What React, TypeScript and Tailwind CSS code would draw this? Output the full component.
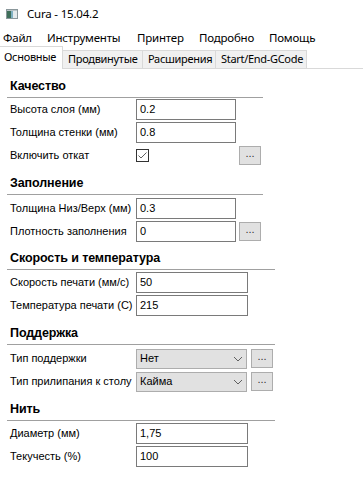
import type { ReactNode } from "react";

const ui = { fontFamily: '"Noto Sans", "Open Sans", sans-serif' };
const dlg = { fontFamily: '"Liberation Sans", Arial, sans-serif' };

function AppIcon() {
  return (
    <svg width="12" height="10" viewBox="0 0 12 10" aria-hidden="true">
      <rect x="0.5" y="0.5" width="11" height="9" fill="#e4eaec" stroke="#8a979b" />
      <rect x="1" y="2" width="4" height="7" fill="#3f6f5a" />
      <rect x="5" y="2" width="2" height="7" fill="#7fb0c2" />
      <rect x="1" y="1" width="10" height="1" fill="#b9c4c7" />
    </svg>
  );
}

function Section({
  title,
  width,
  h,
  pt,
  children,
}: {
  title: string;
  width: number;
  h: number;
  pt: number;
  children: ReactNode;
}) {
  return (
    <div>
      <div
        className="flex items-end border-b border-[#a0a0a0] pb-[1px] pl-[3px] text-[12.5px] font-bold tracking-[-0.1px] text-black"
        style={{ width, height: h }}
      >
        {title}
      </div>
      <div className="flex flex-col gap-[2px] pl-[3px]" style={{ paddingTop: pt }}>
        {children}
      </div>
    </div>
  );
}

function Row({ label, children }: { label: string; children: ReactNode }) {
  return (
    <div className="flex h-[21px] items-center">
      <span className="w-[126px] shrink-0 text-[11px] text-black">{label}</span>
      {children}
    </div>
  );
}

function Field({ value, w }: { value: string; w: number }) {
  return (
    <div
      className="flex h-[21px] items-center border border-[#7a7a7a] bg-white pl-[3px] text-[11px] text-black"
      style={{ width: w }}
    >
      {value}
    </div>
  );
}

function Dots({ ml }: { ml: number }) {
  return (
    <button
      type="button"
      className="flex h-[19px] w-[22px] items-center justify-center border border-[#adadad] bg-[#e1e1e1] pb-[4px] text-[11px] leading-none text-[#333]"
      style={{ marginLeft: ml }}
    >
      ...
    </button>
  );
}

function Choice({ value }: { value: string }) {
  return (
    <div className="flex h-[20px] w-[111px] items-center justify-between border border-[#adadad] bg-[#e1e1e1] pl-[3px] pr-[3px] text-[11px] text-black">
      <span>{value}</span>
      <svg width="10" height="6" viewBox="0 0 10 6" aria-hidden="true">
        <path d="M1 1 L5 5 L9 1" fill="none" stroke="#606060" strokeWidth="1" />
      </svg>
    </div>
  );
}

function Check() {
  return (
    <div className="flex h-[13px] w-[13px] items-center justify-center border border-[#333333] bg-white">
      <svg width="11" height="11" viewBox="0 0 11 11" aria-hidden="true">
        <path d="M1.5 5.5 L4 8 L9.5 2.5" fill="none" stroke="#606060" strokeWidth="1" />
      </svg>
    </div>
  );
}

export default function App() {
  const menu: [string, number][] = [
    ["Файл", 44],
    ["Инструменты", 90],
    ["Принтер", 62],
    ["Подробно", 70],
    ["Помощь", 60],
  ];
  const tabs: [string, number][] = [
    ["Продвинутые", 80],
    ["Расширения", 73],
    ["Start/End-GCode", 91],
  ];

  return (
    <div className="h-[495px] w-[363px] overflow-hidden whitespace-nowrap bg-white text-black" style={ui}>
      <div className="flex h-[28px] items-center pl-[6px] text-[11.5px] tracking-[-0.2px]">
        <AppIcon />
        <span className="ml-[9px]">Cura - 15.04.2</span>
      </div>

      <div className="flex h-[19px] items-center pl-[3px] text-[11.5px] tracking-[-0.2px]">
        {menu.map(([m, w]) => (
          <span key={m} className="shrink-0" style={{ width: w }}>
            {m}
          </span>
        ))}
      </div>

      <div className="flex h-[22px] items-end border-b border-[#d9d9d9] text-[11px] tracking-[-0.3px]">
        <div className="relative -mb-px flex h-[23px] w-[63px] shrink-0 items-center border-t border-r border-[#d9d9d9] bg-white pl-[4px] pb-[1px]">
          Основные
        </div>
        {tabs.map(([t, w]) => (
          <div
            key={t}
            className="-mb-px flex h-[19px] shrink-0 items-center border-y border-r border-[#d9d9d9] bg-[#f0f0f0] pl-[5px]"
            style={{ width: w }}
          >
            {t}
          </div>
        ))}
      </div>

      <div className="pl-[7px]" style={dlg}>
        <Section title="Качество" width={256} h={29} pt={1}>
          <Row label="Высота слоя (мм)">
            <Field value="0.2" w={100} />
          </Row>
          <Row label="Толщина стенки (мм)">
            <Field value="0.8" w={100} />
          </Row>
          <Row label="Включить откат">
            <Check />
            <Dots ml={90} />
          </Row>
        </Section>

        <Section title="Заполнение" width={256} h={29} pt={3}>
          <Row label="Толщина Низ/Верх (мм)">
            <Field value="0.3" w={100} />
          </Row>
          <Row label="Плотность заполнения">
            <Field value="0" w={100} />
            <Dots ml={3} />
          </Row>
        </Section>

        <Section title="Скорость и температура" width={268} h={28} pt={2}>
          <Row label="Скорость печати (мм/с)">
            <Field value="50" w={112} />
          </Row>
          <Row label="Температура печати (С)">
            <Field value="215" w={112} />
          </Row>
        </Section>

        <Section title="Поддержка" width={268} h={29} pt={3}>
          <Row label="Тип поддержки">
            <Choice value="Нет" />
            <Dots ml={4} />
          </Row>
          <Row label="Тип прилипания к столу">
            <Choice value="Кайма" />
            <Dots ml={4} />
          </Row>
        </Section>

        <Section title="Нить" width={268} h={29} pt={2}>
          <Row label="Диаметр (мм)">
            <Field value="1,75" w={112} />
          </Row>
          <Row label="Текучесть (%)">
            <Field value="100" w={112} />
          </Row>
        </Section>
      </div>
    </div>
  );
}
